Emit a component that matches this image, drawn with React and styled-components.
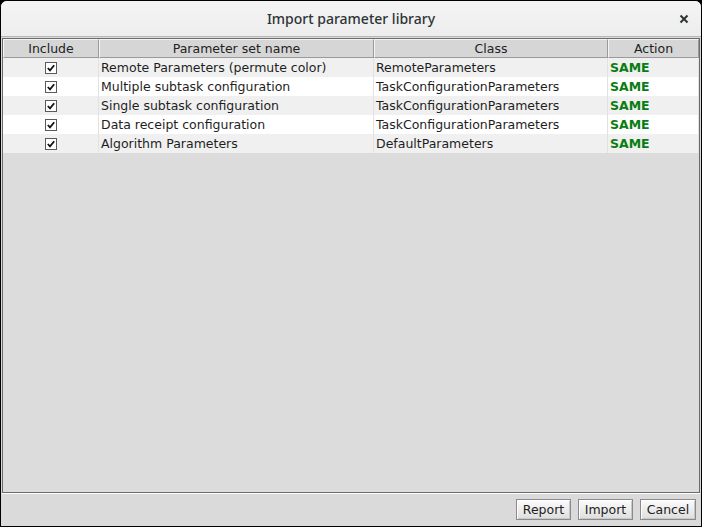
import React from 'react';
import styled, { createGlobalStyle } from 'styled-components';

const GlobalStyle = createGlobalStyle`
  html, body {
    margin: 0;
    padding: 0;
    background: #000;
  }
  #root {
    width: 702px;
    height: 527px;
  }
`;

const Window = styled.div`
  box-sizing: border-box;
  width: 702px;
  height: 527px;
  border: 1px solid #000;
  border-radius: 7px 7px 0 0;
  overflow: hidden;
  display: flex;
  flex-direction: column;
  background: #dadada;
  font-family: 'DejaVu Sans', sans-serif;
  font-size: 12.5px;
  color: #1e1e1e;
`;

const TitleBar = styled.div`
  height: 35px;
  flex: none;
  display: flex;
  align-items: center;
  justify-content: center;
  position: relative;
  background: linear-gradient(#f4f4f4, #ededed);
  border-bottom: 1px solid #b6b6b6;
`;

const Title = styled.div`
  font-family: 'Noto Sans', sans-serif;
  font-size: 14px;
  font-weight: 500;
  color: #2e3436;
`;

const CloseButton = styled.div`
  position: absolute;
  right: 12px;
  top: 13px;
  width: 10px;
  height: 10px;
  display: flex;
`;

const Body = styled.div`
  flex: 1;
  display: flex;
  flex-direction: column;
  padding: 1px 1px 0 1px;
`;

const ScrollPane = styled.div`
  flex: 1;
  border: 1px solid #6b6b6b;
  background: #dcdcdc;
  display: flex;
  flex-direction: column;
`;

const Row = styled.div`
  display: grid;
  grid-template-columns: 96px 275px 234px 1fr;
  height: 19px;
  background: ${p => (p.$alt ? '#ffffff' : '#f0f0f0')};
`;

const HeaderRow = styled(Row)`
  background: #d6d6d6;
`;

const HeaderCell = styled.div`
  box-sizing: border-box;
  display: flex;
  align-items: center;
  justify-content: center;
  padding-top: 2px;
  border-top: 1px solid #f4f4f4;
  border-left: 1px solid #f4f4f4;
  border-right: 1px solid #9a9a9a;
  border-bottom: 1px solid #9a9a9a;
  color: #222;
  line-height: 1;
`;

const Cell = styled.div`
  display: flex;
  align-items: center;
  justify-content: ${p => (p.$center ? 'center' : 'flex-start')};
  padding-left: ${p => (p.$center ? '0' : '2px')};
  border-right: 1px solid #e2e2e2;
  white-space: nowrap;
  overflow: hidden;
`;

const ActionText = styled.span`
  font-weight: bold;
  color: #0a7d12;
`;

const Box = styled.div`
  box-sizing: border-box;
  width: 12px;
  height: 12px;
  border: 1px solid #5a5a5a;
  background: #fff;
  display: flex;
  align-items: center;
  justify-content: center;
  margin-left: 1px;
`;

const Footer = styled.div`
  box-sizing: border-box;
  height: 33px;
  flex: none;
  display: flex;
  justify-content: flex-end;
  align-items: flex-start;
  gap: 7px;
  padding: 5px 4px 0 0;
  border-top: 1px solid #fff;
`;

const Button = styled.button`
  box-sizing: border-box;
  height: 21px;
  width: ${p => p.$w}px;
  padding: 0;
  font-family: 'DejaVu Sans', sans-serif;
  font-size: 12.5px;
  color: #222;
  border: 1px solid #8a8a8a;
  box-shadow: inset 1px 1px 0 #fff, inset -1px -1px 0 #c8c8c8;
  background: linear-gradient(#fbfbfb, #dedede);
  border-radius: 0;
`;

const rows = [
  { name: 'Remote Parameters (permute color)', cls: 'RemoteParameters' },
  { name: 'Multiple subtask configuration', cls: 'TaskConfigurationParameters' },
  { name: 'Single subtask configuration', cls: 'TaskConfigurationParameters' },
  { name: 'Data receipt configuration', cls: 'TaskConfigurationParameters' },
  { name: 'Algorithm Parameters', cls: 'DefaultParameters' },
];

const Check = () => (
  <Box>
    <svg width="8" height="8" viewBox="0 0 8 8">
      <path d="M0.8 4 L3 6.3 L7.2 1.2" fill="none" stroke="#111" strokeWidth="1.8" />
    </svg>
  </Box>
);

const App = () => {
  return (
    <Window>
      <GlobalStyle />
      <TitleBar>
        <Title>Import parameter library</Title>
        <CloseButton>
          <svg width="10" height="10" viewBox="0 0 10 10">
            <path d="M1.5 1.5 L8.5 8.5 M8.5 1.5 L1.5 8.5" stroke="#2e3436" strokeWidth="2" />
          </svg>
        </CloseButton>
      </TitleBar>
      <Body>
        <ScrollPane>
          <HeaderRow>
            <HeaderCell>Include</HeaderCell>
            <HeaderCell>Parameter set name</HeaderCell>
            <HeaderCell>Class</HeaderCell>
            <HeaderCell>Action</HeaderCell>
          </HeaderRow>
          {rows.map((r, i) => (
            <Row key={i} $alt={i % 2 === 1}>
              <Cell $center>
                <Check />
              </Cell>
              <Cell>{r.name}</Cell>
              <Cell>{r.cls}</Cell>
              <Cell>
                <ActionText>SAME</ActionText>
              </Cell>
            </Row>
          ))}
        </ScrollPane>
        <Footer>
          <Button $w={55}>Report</Button>
          <Button $w={55}>Import</Button>
          <Button $w={56}>Cancel</Button>
        </Footer>
      </Body>
    </Window>
  );
};

export default App;
